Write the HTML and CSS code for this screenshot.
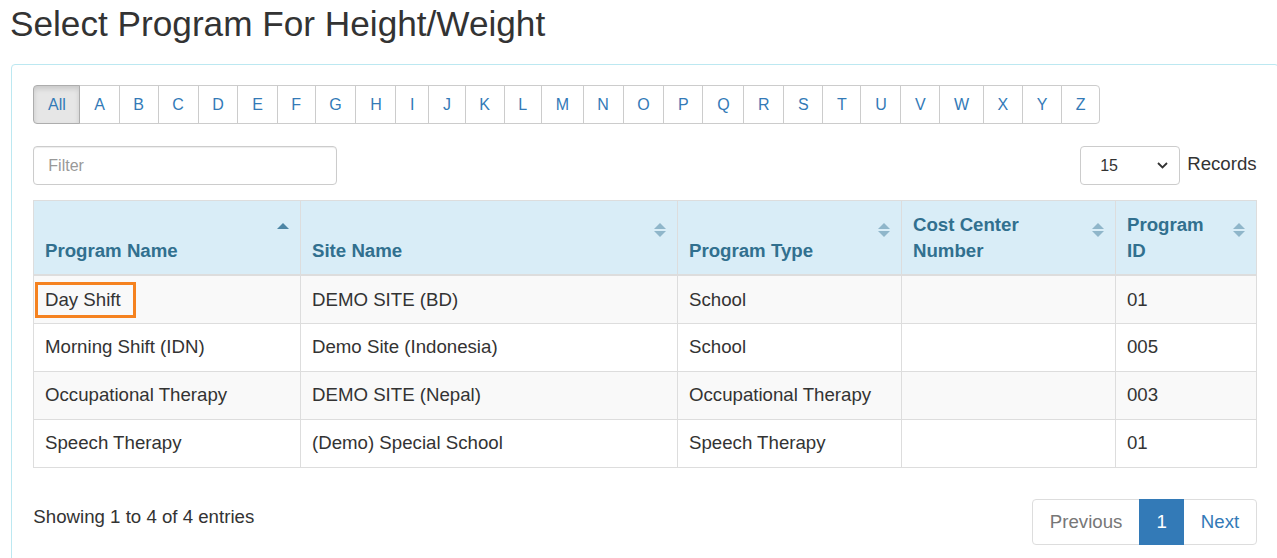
FILE: index.html
```html
<!DOCTYPE html>
<html lang="en">
<head>
<meta charset="utf-8">
<title>Select Program For Height/Weight</title>
<link rel="stylesheet" href="styles.css">
</head>
<body>
<div class="page">
  <h1 class="title">Select Program For Height/Weight</h1>
  <div class="panel">
    <div class="panel-body">
      <div class="alpha">
        <a class="alpha-btn active">All</a><a class="alpha-btn">A</a><a class="alpha-btn">B</a><a class="alpha-btn">C</a><a class="alpha-btn">D</a><a class="alpha-btn">E</a><a class="alpha-btn">F</a><a class="alpha-btn">G</a><a class="alpha-btn">H</a><a class="alpha-btn">I</a><a class="alpha-btn">J</a><a class="alpha-btn">K</a><a class="alpha-btn">L</a><a class="alpha-btn">M</a><a class="alpha-btn">N</a><a class="alpha-btn">O</a><a class="alpha-btn">P</a><a class="alpha-btn">Q</a><a class="alpha-btn">R</a><a class="alpha-btn">S</a><a class="alpha-btn">T</a><a class="alpha-btn">U</a><a class="alpha-btn">V</a><a class="alpha-btn">W</a><a class="alpha-btn">X</a><a class="alpha-btn">Y</a><a class="alpha-btn">Z</a>
      </div>

      <div class="toolbar">
        <input class="filter" type="text" placeholder="Filter">
        <div class="length">
          <div class="select-wrap">
            <select class="select"><option>15</option><option>25</option><option>50</option></select>
            <svg class="chev" width="11" height="7" viewBox="0 0 11 7"><polyline points="1,1 5.5,5.5 10,1" fill="none" stroke="#333" stroke-width="1.8"/></svg>
          </div>
          <span class="records">Records</span>
        </div>
      </div>

      <table class="grid">
        <colgroup>
          <col class="c1"><col class="c2"><col class="c3"><col class="c4"><col class="c5">
        </colgroup>
        <thead>
          <tr>
            <th>Program Name<span class="sort asc"><svg width="12" height="16" viewBox="0 0 12 16"><polygon points="0,7 6,1 12,7" fill="currentColor"/></svg></span></th>
            <th>Site Name<span class="sort"><svg width="12" height="16" viewBox="0 0 12 16"><polygon points="0,7 6,1 12,7" fill="currentColor"/><polygon points="0,9 12,9 6,15" fill="currentColor"/></svg></span></th>
            <th>Program Type<span class="sort"><svg width="12" height="16" viewBox="0 0 12 16"><polygon points="0,7 6,1 12,7" fill="currentColor"/><polygon points="0,9 12,9 6,15" fill="currentColor"/></svg></span></th>
            <th>Cost Center Number<span class="sort"><svg width="12" height="16" viewBox="0 0 12 16"><polygon points="0,7 6,1 12,7" fill="currentColor"/><polygon points="0,9 12,9 6,15" fill="currentColor"/></svg></span></th>
            <th>Program ID<span class="sort"><svg width="12" height="16" viewBox="0 0 12 16"><polygon points="0,7 6,1 12,7" fill="currentColor"/><polygon points="0,9 12,9 6,15" fill="currentColor"/></svg></span></th>
          </tr>
        </thead>
        <tbody>
          <tr><td><span class="mark">Day Shift</span></td><td>DEMO SITE (BD)</td><td>School</td><td></td><td>01</td></tr>
          <tr><td>Morning Shift (IDN)</td><td>Demo Site (Indonesia)</td><td>School</td><td></td><td>005</td></tr>
          <tr><td>Occupational Therapy</td><td>DEMO SITE (Nepal)</td><td>Occupational Therapy</td><td></td><td>003</td></tr>
          <tr><td>Speech Therapy</td><td>(Demo) Special School</td><td>Speech Therapy</td><td></td><td>01</td></tr>
        </tbody>
      </table>

      <div class="footer">
        <div class="info">Showing 1 to 4 of 4 entries</div>
        <ul class="pager">
          <li class="pg disabled">Previous</li>
          <li class="pg current">1</li>
          <li class="pg">Next</li>
        </ul>
      </div>
    </div>
  </div>
</div>
</body>
</html>
```

FILE: styles.css
```css
html, body {
  margin: 0;
  padding: 0;
  overflow: hidden;
  background: #fff;
}

body {
  font-family: "Liberation Sans", Arial, Helvetica, sans-serif;
  font-size: 18.67px;
  line-height: 26.67px;
  color: #333;
}

.page {
  width: 1279px;
  padding-left: 11px;
  box-sizing: border-box;
}

.title {
  font-size: 35.2px;
  font-weight: normal;
  line-height: 38.5px;
  margin: 4.5px 0 21px -1px;
  color: #333;
}

.panel {
  border: 1px solid #bce8f1;
  border-radius: 4px;
  height: 530px;
}

.panel-body {
  padding: 20px 21.33px;
}

/* alphabet filter */
.alpha {
  display: flex;
}

.alpha-btn {
  display: block;
  box-sizing: border-box;
  height: 39px;
  line-height: 37px;
  padding: 0 13.7px;
  border: 1px solid #ccc;
  margin-left: -1px;
  font-size: 16px;
  color: #337ab7;
  background: #fff;
  cursor: pointer;
}

.alpha-btn:first-child {
  margin-left: 0;
  border-radius: 4px 0 0 4px;
}

.alpha-btn:last-child {
  border-radius: 0 4px 4px 0;
}

.alpha-btn.active {
  position: relative;
  z-index: 2;
  background: #e6e6e6;
  border-color: #adadad;
  box-shadow: inset 0 3px 5px rgba(0, 0, 0, 0.125);
}

/* toolbar */
.toolbar {
  display: flex;
  justify-content: space-between;
  align-items: center;
  margin-top: 22px;
}

.filter {
  box-sizing: border-box;
  width: 304px;
  height: 39px;
  padding: 0 14px;
  border: 1px solid #ccc;
  border-radius: 4px;
  box-shadow: inset 0 1px 1px rgba(0, 0, 0, 0.075);
  font-family: inherit;
  font-size: 16px;
  color: #555;
  outline: none;
}

.filter::placeholder {
  color: #999;
}

.length {
  display: flex;
  align-items: center;
}

.select-wrap {
  position: relative;
}

.select {
  -webkit-appearance: none;
  appearance: none;
  box-sizing: border-box;
  width: 100px;
  height: 39px;
  padding: 0 0 0 19px;
  border: 1px solid #ccc;
  border-radius: 4px;
  background: #fff;
  font-family: inherit;
  font-size: 16px;
  color: #333;
  outline: none;
}

.chev {
  position: absolute;
  right: 12px;
  top: 16px;
  pointer-events: none;
}

.records {
  margin-left: 7px;
  margin-top: -2px;
  font-size: 18.67px;
}

/* table */
.grid {
  width: 100%;
  margin-top: 15px;
  border-collapse: collapse;
  table-layout: fixed;
  border: 1px solid #ddd;
}

.c1 { width: 267px; }
.c2 { width: 377px; }
.c3 { width: 224px; }
.c4 { width: 214px; }
.c5 { width: 141px; }

.grid th {
  position: relative;
  background: #d9edf7;
  color: #31708f;
  font-weight: bold;
  text-align: left;
  vertical-align: bottom;
  padding: 10.5px 33px 9.5px 10.67px;
  line-height: 26.67px;
  border: 1px solid #ddd;
  border-bottom: 2px solid #ddd;
}

.grid td {
  padding: 10.17px 10.67px;
  line-height: 26.67px;
  border: 1px solid #ddd;
  vertical-align: top;
}

.grid tbody tr:nth-child(odd) td {
  background: #f9f9f9;
}

.sort {
  position: absolute;
  top: 21px;
  right: 11px;
  width: 12px;
  height: 16px;
  color: #8fb6ca;
}

.sort svg {
  display: block;
}

.sort.asc {
  color: #4d86a5;
}

.mark {
  position: relative;
}

.mark::after {
  content: "";
  position: absolute;
  left: -9.5px;
  right: -15px;
  top: -7px;
  bottom: -8px;
  border: 3px solid #f5821f;
}

/* footer */
.footer {
  display: flex;
  justify-content: space-between;
  align-items: flex-start;
  margin-top: 31px;
}

.info {
  padding-top: 5px;
}

.pager {
  display: flex;
  list-style: none;
  margin: 0;
  padding: 0;
}

.pg {
  padding: 8px 16.5px;
  line-height: 28px;
  border: 1px solid #ddd;
  margin-left: -1px;
  color: #337ab7;
  background: #fff;
}

.pg:first-child {
  margin-left: 0;
  border-radius: 4px 0 0 4px;
}

.pg:last-child {
  border-radius: 0 4px 4px 0;
}

.pg.disabled {
  color: #777;
}

.pg.current {
  position: relative;
  z-index: 2;
  background: #337ab7;
  border-color: #337ab7;
  color: #fff;
}
```
